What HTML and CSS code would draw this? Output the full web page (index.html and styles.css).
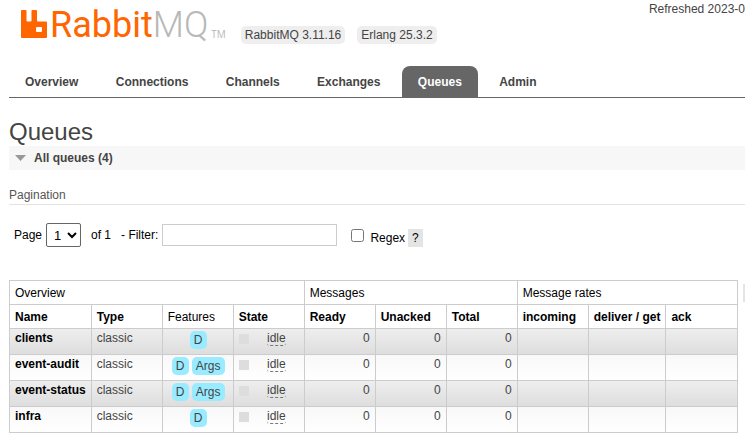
FILE: index.html
```html
<!DOCTYPE html>
<html lang="en">
<head>
<meta charset="utf-8">
<title>RabbitMQ Management</title>
<link rel="stylesheet" href="styles.css">
</head>
<body>
<header class="top">
  <a class="logo" href="#" aria-label="RabbitMQ">
    <svg class="mark" width="27" height="29" viewBox="0 0 27 29" aria-hidden="true">
      <path fill="#f60" fill-rule="evenodd" d="M1 0H4.500Q5.500 0 5.500 1V10.500Q5.500 11.500 6.500 11.500H9.500Q10.500 11.500 10.500 10.500V1Q10.500 0 11.500 0H15Q16 0 16 1V10.500Q16 11.500 17 11.500H25Q26 11.500 26 12.500V27Q26 28 25 28H1Q0 28 0 27V1Q0 0 1 0ZM16 17Q15 17 15 18V21Q15 22 16 22H20Q21 22 21 21V18Q21 17 20 17Z"/>
    </svg>
    <span class="wordmark">Rabbit<span class="mq">MQ</span></span>
    <span class="tm">TM</span>
  </a>
  <ul class="versions">
    <li>RabbitMQ 3.11.16</li>
    <li>Erlang 25.3.2</li>
  </ul>
  <div class="status">Refreshed 2023-0</div>
</header>
<nav>
  <ul class="tabs">
    <li><a href="#">Overview</a></li>
    <li><a href="#">Connections</a></li>
    <li><a href="#">Channels</a></li>
    <li><a href="#">Exchanges</a></li>
    <li><a href="#" class="selected" aria-current="page">Queues</a></li>
    <li><a href="#">Admin</a></li>
  </ul>
</nav>
<main>
  <h1>Queues</h1>
  <h2>
    <svg width="11" height="6" viewBox="0 0 11 6" aria-hidden="true"><path fill="#999" d="M0 0H11L5.500 6Z"/></svg>
    All queues (4)
  </h2>
  <h3>Pagination</h3>
  <form class="filter">
    <label for="page">Page</label>
    <select id="page"><option>1</option></select>
    <span class="of">of 1</span>
    <label class="filter-label" for="name-filter">- Filter:</label>
    <input type="text" id="name-filter">
    <input type="checkbox" id="regex">
    <span class="regex"><label for="regex">Regex</label><button type="button" class="help">?</button></span>
  </form>
  <div class="list">
    <table>
      <thead>
        <tr><th colspan="4" class="plain">Overview</th><th colspan="3" class="plain">Messages</th><th colspan="3" class="plain">Message rates</th></tr>
        <tr><th>Name</th><th>Type</th><th class="plain">Features</th><th>State</th><th>Ready</th><th>Unacked</th><th>Total</th><th>incoming</th><th>deliver / get</th><th>ack</th></tr>
      </thead>
      <tbody>
        <tr><td><a href="#">clients</a></td><td>classic</td><td class="features"><span>D</span></td><td><div class="state"><abbr>idle</abbr></div></td><td class="n">0</td><td class="n">0</td><td class="n">0</td><td></td><td></td><td></td></tr>
        <tr><td><a href="#">event-audit</a></td><td>classic</td><td class="features"><span>D</span> <span>Args</span></td><td><div class="state"><abbr>idle</abbr></div></td><td class="n">0</td><td class="n">0</td><td class="n">0</td><td></td><td></td><td></td></tr>
        <tr><td><a href="#">event-status</a></td><td>classic</td><td class="features"><span>D</span> <span>Args</span></td><td><div class="state"><abbr>idle</abbr></div></td><td class="n">0</td><td class="n">0</td><td class="n">0</td><td></td><td></td><td></td></tr>
        <tr><td><a href="#">infra</a></td><td>classic</td><td class="features"><span>D</span></td><td><div class="state"><abbr>idle</abbr></div></td><td class="n">0</td><td class="n">0</td><td class="n">0</td><td></td><td></td><td></td></tr>
      </tbody>
    </table>
    <button type="button" class="columns" aria-label="Choose columns"></button>
  </div>
</main>
</body>
</html>
```
FILE: styles.css
```css
* { box-sizing: border-box; }

body {
  margin: 0;
  padding-left: 9px;
  overflow: hidden;
  background: #fff;
  color: #444;
  font: 12px/14px "Liberation Sans", Arial, sans-serif;
}

ul { list-style: none; margin: 0; padding: 0; }
a { color: inherit; text-decoration: none; }

.top { display: flex; height: 66px; padding-left: 12px; }

.logo { display: flex; align-items: flex-start; height: 48px; color: #f60; }
.mark { margin: 10px 2px 0 0; }
.wordmark { font: 400 36px/50px Roboto, "Open Sans", sans-serif; }
.mq, .tm { color: #b8b8b8; }
.mq { font-weight: 300; }
.tm { margin: 27px 0 0 3px; font: 10px/14px "Open Sans", sans-serif; }

.versions { display: flex; gap: 12px; margin: 26px 0 0 15px; }
.versions li { height: 18px; padding: 2px 4px; border-radius: 5px; background: #eee; white-space: nowrap; }

.status { margin: 2px 0 0 auto; white-space: nowrap; }

.tabs { border-bottom: 1px solid #666; }
.tabs li { display: inline-block; margin-right: 2px; vertical-align: top; }
.tabs a { display: block; padding: 9px 16px 8px; border-radius: 8px 8px 0 0; font-weight: bold; }
.tabs .selected { background: #666; color: #fff; }

h1 { margin: 20px 0 0; font-size: 24px; line-height: 28px; font-weight: normal; }
h2 { display: flex; align-items: center; gap: 8px; margin: 0; padding: 5px 6px; background: #f7f7f7; font-size: 12px; line-height: 14px; }
h3 { margin: 18px 0 0; padding-bottom: 2px; border-bottom: 1px solid #e4e4e4; font-size: 12px; line-height: 14px; font-weight: normal; color: #555; }

.filter { display: flex; align-items: center; height: 24px; margin: 18px 0 0 5px; color: #000; }
.filter select { width: 35px; height: 24px; margin-left: 4px; padding: 0 3px; border: 1px solid #666; border-radius: 2px; background: #fff; color: #000; font: 13px "Liberation Sans", sans-serif; }
.of { margin-left: 10px; }
.filter-label { margin-left: 10px; }
.filter input[type="text"] { width: 175px; height: 22px; margin-left: 4px; padding: 4px; border: 1px solid #ccc; }
.filter input[type="checkbox"] { width: 13px; height: 13px; margin: 0 6px 0 14px; }
.regex { display: flex; align-items: center; padding-top: 5px; }
.help { height: 18px; margin-left: 3px; padding: 0 4px; border: 0; background: #e4e4e4; color: #000; font: inherit; }

.list { display: flex; align-items: flex-start; margin-top: 33px; }
table { flex: none; border-collapse: collapse; }
th, td { min-width: 71px; padding: 6px 5px 4px; border: 1px solid #ccc; line-height: 13px; text-align: left; vertical-align: top; white-space: nowrap; }
th:last-child { min-width: 72px; }
th { color: #000; }
th.plain { font-weight: normal; }
td { height: 26px; padding: 3px 5px 2px; }
tbody tr { background: linear-gradient(#f8f8f8, #fff); }
tbody tr:nth-child(odd) { background: linear-gradient(#eee, #ddd); }
td a { color: #000; font-weight: bold; }
.n { text-align: right; }
.features { padding: 2px 0 0 1px; text-align: center; }
.features span { display: inline-block; padding: 2px 4px; border-radius: 5px; background: #99ebff; line-height: 14px; }
.state { display: flex; justify-content: space-between; padding-right: 13px; }
.state::before { content: ""; width: 10px; height: 10px; margin-top: 2px; background: #ddd; }
.state abbr { border-bottom: 1px dashed #777; border-radius: 3px; }
.columns { flex: none; width: 20px; height: 18px; margin: 4px 0 0 5px; padding: 0; border: 0; background: #e4e4e4; }
```
